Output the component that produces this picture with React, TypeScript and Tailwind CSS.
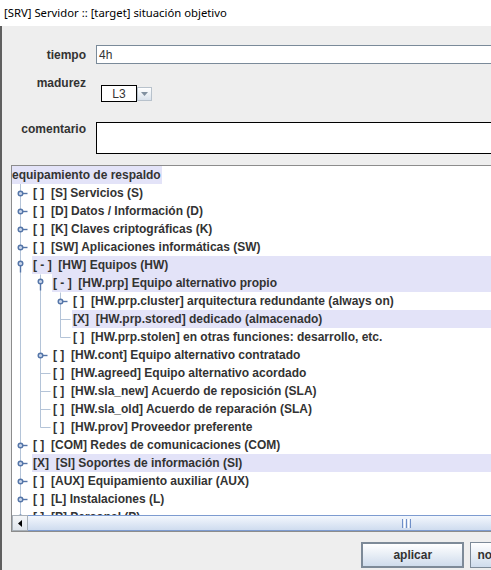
import React from "react";

type Row = {
  level: number;
  text: string;
  kind: "root" | "collapsed" | "expanded" | "leaf";
  hl?: boolean;
};

const rows: Row[] = [
  { level: 0, text: "equipamiento de respaldo", kind: "root", hl: true },
  { level: 1, text: "[ ]  [S] Servicios (S)", kind: "collapsed" },
  { level: 1, text: "[ ]  [D] Datos / Información (D)", kind: "collapsed" },
  { level: 1, text: "[ ]  [K] Claves criptográficas (K)", kind: "collapsed" },
  { level: 1, text: "[ ]  [SW] Aplicaciones informáticas (SW)", kind: "collapsed" },
  { level: 1, text: "[ - ]  [HW] Equipos (HW)", kind: "expanded", hl: true },
  { level: 2, text: "[ - ]  [HW.prp] Equipo alternativo propio", kind: "expanded", hl: true },
  { level: 3, text: "[ ]  [HW.prp.cluster] arquitectura redundante (always on)", kind: "collapsed" },
  { level: 3, text: "[X]  [HW.prp.stored] dedicado (almacenado)", kind: "leaf", hl: true },
  { level: 3, text: "[ ]  [HW.prp.stolen] en otras funciones: desarrollo, etc.", kind: "leaf" },
  { level: 2, text: "[ ]  [HW.cont] Equipo alternativo contratado", kind: "collapsed" },
  { level: 2, text: "[ ]  [HW.agreed] Equipo alternativo acordado", kind: "leaf" },
  { level: 2, text: "[ ]  [HW.sla_new] Acuerdo de reposición (SLA)", kind: "leaf" },
  { level: 2, text: "[ ]  [HW.sla_old] Acuerdo de reparación (SLA)", kind: "leaf" },
  { level: 2, text: "[ ]  [HW.prov] Proveedor preferente", kind: "leaf" },
  { level: 1, text: "[ ]  [COM] Redes de comunicaciones (COM)", kind: "collapsed" },
  { level: 1, text: "[X]  [SI] Soportes de información (SI)", kind: "collapsed", hl: true },
  { level: 1, text: "[ ]  [AUX] Equipamiento auxiliar (AUX)", kind: "collapsed" },
  { level: 1, text: "[ ]  [L] Instalaciones (L)", kind: "collapsed" },
  { level: 1, text: "[ ]  [P] Personal (P)", kind: "collapsed" },
];

const indent: Record<number, string> = {
  1: "w-[20px]",
  2: "w-[40px]",
  3: "w-[60px]",
};

const ROW = 18;
const LINE = "#b4c4d8";
const HANDLE = "#5475a8";

function TreeLines() {
  const els: React.ReactNode[] = [];
  const c = (i: number) => i * ROW + 9 + 0.5;
  els.push(<line key="v1" x1={8.5} y1={18} x2={8.5} y2={349} stroke={LINE} />);
  els.push(<line key="v2" x1={28.5} y1={c(5) + 9} x2={28.5} y2={c(14)} stroke={LINE} />);
  els.push(<line key="v3" x1={48.5} y1={c(6) + 9} x2={48.5} y2={c(9)} stroke={LINE} />);
  rows.forEach((r, i) => {
    if (r.level === 0) return;
    const lx = 20 * r.level - 12 + 0.5;
    const cy = c(i);
    if (r.kind === "leaf") {
      els.push(<line key={"h" + i} x1={lx} y1={cy} x2={lx + 10} y2={cy} stroke={LINE} />);
    } else if (r.kind === "collapsed") {
      els.push(<line key={"s" + i} x1={lx + 2} y1={cy} x2={lx + 7} y2={cy} stroke={HANDLE} strokeWidth={1.4} />);
      els.push(<circle key={"c" + i} cx={lx} cy={cy} r={2.3} fill="#c9d5ea" stroke={HANDLE} strokeWidth={1.4} />);
    } else {
      els.push(<line key={"s" + i} x1={lx} y1={cy} x2={lx} y2={cy + 7} stroke={HANDLE} strokeWidth={1.4} />);
      els.push(<circle key={"c" + i} cx={lx} cy={cy - 2} r={2.3} fill="#c9d5ea" stroke={HANDLE} strokeWidth={1.4} />);
    }
  });
  return (
    <svg className="absolute left-0 top-0 pointer-events-none" width={560} height={349}>
      {els}
    </svg>
  );
}

export default function App() {
  return (
    <div className="w-[491px] h-[570px] overflow-hidden bg-[#eeeeee] font-['Liberation_Sans',Arial,sans-serif] text-[12px] text-[#333333]">
      <div className="h-[26px] bg-white flex items-center pl-[4px] font-['Noto_Sans',sans-serif] text-[11.3px] text-black leading-none">
        [SRV] Servidor :: [target] situación objetivo
      </div>
      <div className="w-[560px] h-[544px] border-l-2 border-[#5f5f5f] flex flex-col">
        <div className="pt-[19px]">
          <div className="flex items-center h-[19px]">
            <div className="w-[84px] text-right font-bold leading-[14px]">tiempo</div>
            <div className="ml-[10px] flex-1 h-[19px] bg-white border border-[#7a8a99] flex items-center pl-[2px] leading-none">
              4h
            </div>
          </div>
          <div className="flex items-start mt-[12px]">
            <div className="w-[84px] text-right font-bold leading-[14px]">madurez</div>
            <div className="ml-[15px] mt-[9px] flex items-center">
              <div className="w-[36px] h-[17px] bg-white border border-black flex items-center justify-center leading-none">
                L3
              </div>
              <div className="w-[15px] h-[14px] border border-[#b8c2cc] bg-gradient-to-b from-[#ffffff] to-[#d9e2ec] flex items-center justify-center">
                <svg width="7" height="4" viewBox="0 0 7 4">
                  <path d="M0 0 H7 L3.5 4 Z" fill="#8090a0" />
                </svg>
              </div>
            </div>
          </div>
          <div className="flex items-start mt-[20px]">
            <div className="w-[84px] text-right font-bold leading-[14px]">comentario</div>
            <div className="ml-[10px] flex-1 h-[32px] bg-white border border-black"></div>
          </div>
        </div>
        <div className="mt-[11px] ml-[9px] h-[367px] border-t border-l border-b border-[#8c8c8c] bg-white flex flex-col">
          <div className="relative h-[349px] overflow-hidden font-bold">
            {rows.map((r, i) =>
              r.level === 0 ? (
                <div key={i} className="h-[18px] flex items-center">
                  <span className="bg-[#e3e3f8] h-[18px] flex items-center pr-[1px]">{r.text}</span>
                </div>
              ) : (
                <div key={i} className="h-[18px] flex">
                  <div className={indent[r.level] + " shrink-0"}></div>
                  <div
                    className={
                      "flex-1 flex items-center pl-[1px] whitespace-pre " + (r.hl ? "bg-[#e3e3f8]" : "")
                    }
                  >
                    {r.text}
                  </div>
                </div>
              )
            )}
            <TreeLines />
          </div>
          <div className="h-[16px] flex">
            <div className="w-[16px] h-[16px] border border-[#a8b0b8] bg-gradient-to-b from-[#f4f6f8] to-[#dfe5ec] flex items-center justify-center">
              <svg width="4" height="7" viewBox="0 0 4 7">
                <path d="M4 0 V7 L0 3.5 Z" fill="#000" />
              </svg>
            </div>
            <div className="flex-1 h-[16px] border-t border-b border-[#7d9bd0] bg-gradient-to-b from-[#f3f7fd] to-[#cfdcef] flex items-center">
              <div className="ml-[374px] flex gap-[1px]">
                <div className="w-[1px] h-[9px] bg-[#6f8fc8]"></div>
                <div className="w-[1px] h-[9px] bg-[#ffffff]"></div>
                <div className="w-[1px] h-[9px] bg-[#6f8fc8]"></div>
                <div className="w-[1px] h-[9px] bg-[#ffffff]"></div>
                <div className="w-[1px] h-[9px] bg-[#6f8fc8]"></div>
              </div>
            </div>
          </div>
        </div>
        <div className="mt-[10px] pl-[359px] flex gap-[6px]">
          <div className="w-[104px] h-[26px] border-2 border-[#7d8a98] bg-gradient-to-b from-[#ffffff] to-[#cfdcec] flex items-center justify-center font-bold">
            aplicar
          </div>
          <div className="w-[90px] h-[26px] border border-[#7d8a98] bg-gradient-to-b from-[#ffffff] to-[#cfdcec] flex items-center pl-[6px] font-bold">
            no aplicar
          </div>
        </div>
      </div>
    </div>
  );
}
